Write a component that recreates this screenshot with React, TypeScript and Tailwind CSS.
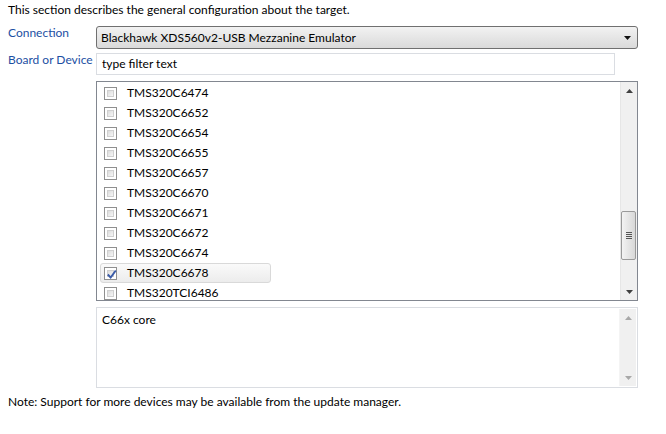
import React from "react";

const devices = [
  "TMS320C6474",
  "TMS320C6652",
  "TMS320C6654",
  "TMS320C6655",
  "TMS320C6657",
  "TMS320C6670",
  "TMS320C6671",
  "TMS320C6672",
  "TMS320C6674",
  "TMS320C6678",
  "TMS320TCI6486",
];

function Check({ checked }: { checked: boolean }) {
  return (
    <div className="w-[13px] h-[13px] border border-[#8f8f8f] bg-white p-[2px] shrink-0">
      <div className="w-full h-full bg-gradient-to-br from-[#dcdcdc] to-[#f6f6f6] border border-[#d0d0d0] relative">
        {checked && (
          <svg viewBox="0 0 9 9" className="absolute left-[-2px] top-[-2px] w-[11px] h-[11px]">
            <path d="M1.5 4.5 L3.8 7 L8 1.2" stroke="#3a5ba8" strokeWidth="1.6" fill="none" />
          </svg>
        )}
      </div>
    </div>
  );
}

function UpArrow({ color = "#404040" }: { color?: string }) {
  return (
    <svg width="7" height="4" viewBox="0 0 7 4">
      <path d="M0 4 L3.5 0 L7 4 Z" fill={color} />
    </svg>
  );
}
function DownArrow({ color = "#404040" }: { color?: string }) {
  return (
    <svg width="7" height="4" viewBox="0 0 7 4">
      <path d="M0 0 L7 0 L3.5 4 Z" fill={color} />
    </svg>
  );
}

export default function App() {
  return (
    <div
      className="w-[666px] h-[434px] bg-white text-black text-[12px] leading-[16px] relative overflow-hidden"
      style={{ fontFamily: 'Lato, "Noto Sans", sans-serif' }}
    >
      <div className="pl-[8px] pt-[2px] h-[20px] whitespace-nowrap">This section describes the general configuration about the target.</div>

      <div className="flex mt-[6px] h-[23px]">
        <div className="w-[96px] pl-[8px] text-[#1c4fa3] mt-[-1px] whitespace-nowrap">Connection</div>
        <div className="w-[542px] h-[23px] rounded-[3px] border border-[#707070] bg-gradient-to-b from-[#f2f2f2] to-[#dadada] flex items-center pl-[4px] pr-[6px]">
          <span className="flex-1 whitespace-nowrap">Blackhawk XDS560v2-USB Mezzanine Emulator</span>
          <DownArrow color="#111" />
        </div>
      </div>

      <div className="flex mt-[4px] h-[22px]">
        <div className="w-[96px] pl-[8px] text-[#1c4fa3] mt-[-1px] whitespace-nowrap">Board or Device</div>
        <div className="w-[519px] h-[22px] border border-[#dadde2] flex items-center pl-[5px]">type filter text</div>
      </div>

      <div className="ml-[96px] mt-[6px] w-[542px] h-[220px] border border-[#828790] flex overflow-hidden">
        <div className="flex-1 pt-[1px] pl-[3px]">
          {devices.map((d) => {
            const sel = d === "TMS320C6678";
            return (
              <div
                key={d}
                className={
                  "h-[20px] w-[171px] flex items-center pl-[3px] gap-[10px] rounded-[3px] border " +
                  (sel ? "border-[#d9d9d9] bg-gradient-to-b from-[#fafafa] to-[#ececec]" : "border-transparent")
                }
              >
                <Check checked={sel} />
                <span>{d}</span>
              </div>
            );
          })}
        </div>
        <div className="w-[17px] bg-[#f0f0f0] border-l border-[#e6e6e6] flex flex-col items-center">
          <div className="h-[17px] flex items-center justify-center">
            <UpArrow />
          </div>
          <div className="flex-1 relative w-full">
            <div className="absolute left-[0px] right-[1px] top-[112px] h-[49px] rounded-[2px] border border-[#9a9a9a] bg-gradient-to-r from-[#f3f3f3] to-[#d8d8d8] flex flex-col items-center justify-center gap-[1px]">
              <div className="w-[6px] h-[1px] bg-[#555]" />
              <div className="w-[6px] h-[1px] bg-[#555]" />
              <div className="w-[6px] h-[1px] bg-[#555]" />
              <div className="w-[6px] h-[1px] bg-[#555]" />
            </div>
          </div>
          <div className="h-[17px] flex items-center justify-center">
            <DownArrow />
          </div>
        </div>
      </div>

      <div className="ml-[96px] mt-[6px] w-[542px] h-[81px] border border-[#dadde2] flex">
        <div className="flex-1 pl-[5px] pt-[4px]">C66x core</div>
        <div className="w-[17px] bg-[#f0f0f0] border-l border-[#f4f4f4] my-[1px] mr-[1px] flex flex-col items-center justify-between">
          <div className="h-[17px] flex items-center justify-center">
            <UpArrow color="#a8a8a8" />
          </div>
          <div className="h-[17px] flex items-center justify-center">
            <DownArrow color="#a8a8a8" />
          </div>
        </div>
      </div>

      <div className="pl-[8px] mt-[6px] whitespace-nowrap">Note: Support for more devices may be available from the update manager.</div>
    </div>
  );
}
